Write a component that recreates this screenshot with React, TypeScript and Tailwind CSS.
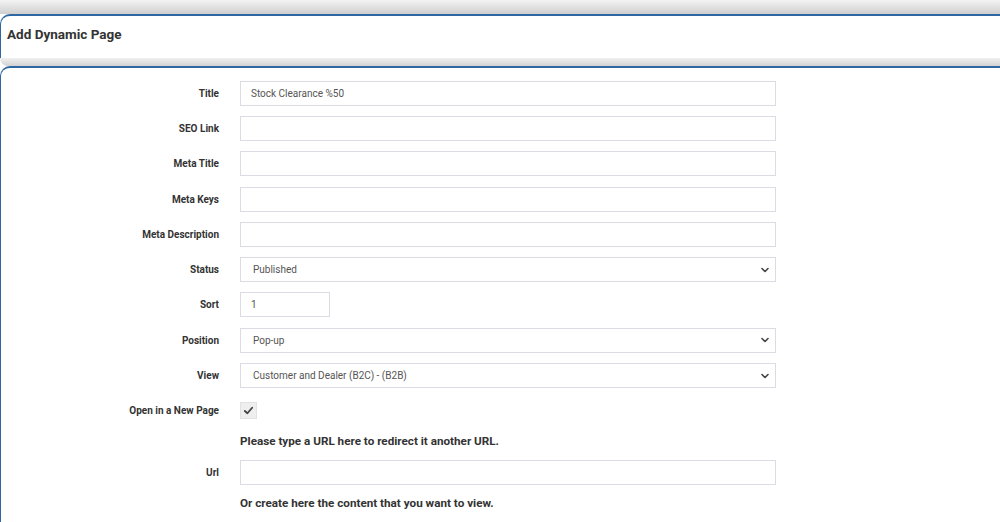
import React from 'react';

const font = { fontFamily: '"Liberation Sans Narrow", "Roboto", "Liberation Sans", sans-serif' };

const Chevron = () => (
  <svg width="10" height="10" viewBox="0 0 10 10" className="absolute right-[5px] top-1/2 -translate-y-1/2">
    <path d="M2 3.5 L5 6.5 L8 3.5" fill="none" stroke="#444" strokeWidth="1.6" strokeLinecap="round" strokeLinejoin="round" />
  </svg>
);

const Row = ({ label, children }: { label: string; children: React.ReactNode }) => (
  <div className="flex items-center h-[35.3px]">
    <div className="w-[218px] text-right text-[10px] font-bold text-[#333]">{label}</div>
    <div className="ml-[21px] flex items-center">{children}</div>
  </div>
);

const TextInput = ({ value = '', w = 'w-[536px]' }: { value?: string; w?: string }) => (
  <div className={`${w} h-[25px] border border-[#dcdbe3] bg-white flex items-center pl-[10px] text-[10px] text-[#555]`}>{value}</div>
);

const Select = ({ value }: { value: string }) => (
  <div className="relative w-[536px] h-[25px] border border-[#dcdbe3] bg-white flex items-center pl-[12px] text-[10px] text-[#555]">
    {value}
    <Chevron />
  </div>
);

export default function App() {
  return (
    <div style={font} className="w-[1000px] h-[522px] overflow-hidden bg-white">
      <div className="h-[14px] bg-gradient-to-b from-[#f4f4f4] to-[#cfcfcf]" />
      <div className="h-[44px] bg-white border-t-2 border-l border-[#2f67a3] rounded-tl-[10px] flex items-center pl-[6px] pb-[6px]">
        <span className="text-[13.5px] font-bold text-[#333]">Add Dynamic Page</span>
      </div>
      <div className="h-[8px] bg-gradient-to-b from-[#f0f0f0] to-[#d2d2d2] rounded-bl-[8px]" />
      <div className="bg-white border-t-2 border-l border-[#2f67a3] rounded-tl-[10px] pt-[7.5px] h-[460px]">
        <Row label="Title"><TextInput value="Stock Clearance %50" /></Row>
        <Row label="SEO Link"><TextInput /></Row>
        <Row label="Meta Title"><TextInput /></Row>
        <Row label="Meta Keys"><TextInput /></Row>
        <Row label="Meta Description"><TextInput /></Row>
        <Row label="Status"><Select value="Published" /></Row>
        <Row label="Sort"><TextInput value="1" w="w-[90px]" /></Row>
        <Row label="Position"><Select value="Pop-up" /></Row>
        <Row label="View"><Select value="Customer and Dealer (B2C) - (B2B)" /></Row>
        <Row label="Open in a New Page">
          <div className="w-[17px] h-[17px] bg-[#eeeeee] border border-[#e2e2e2] flex items-center justify-center">
            <svg width="11" height="11" viewBox="0 0 12 12">
              <path d="M2 6.5 L4.8 9 L10 3" fill="none" stroke="#444" strokeWidth="2" strokeLinecap="round" strokeLinejoin="round" />
            </svg>
          </div>
        </Row>
        <div className="h-[26px] flex items-center pl-[239px] text-[11.7px] font-bold text-[#333]">
          Please type a URL here to redirect it another URL.
        </div>
        <Row label="Url"><TextInput /></Row>
        <div className="h-[29px] flex items-center pl-[239px] text-[11.7px] font-bold text-[#333]">
          Or create here the content that you want to view.
        </div>
      </div>
    </div>
  );
}
